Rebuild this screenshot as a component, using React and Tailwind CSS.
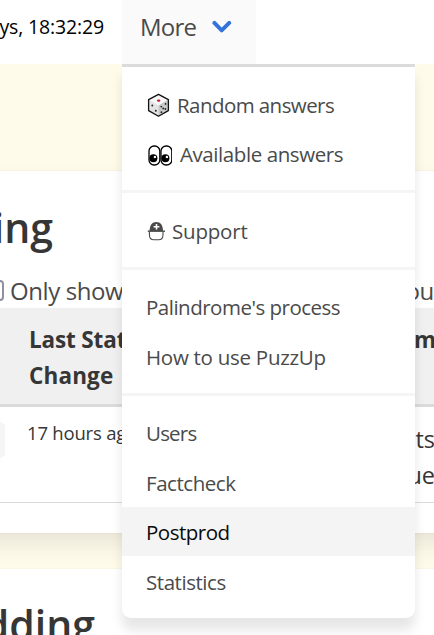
import React from "react";

function Dice() {
  return (
    <svg className="h-[24px] w-[24px] shrink-0" viewBox="0 0 24 24">
      <path d="M12.5 1.4 22.4 6.6V17.6L12.5 23.2 2.6 17.6V6.6Z" fill="#e4e4e4" />
      <path d="M12.5 1.4 22.4 6.6 12.5 12.4 2.6 6.6Z" fill="#f8f8f8" />
      <path d="M12.5 12.4 22.4 6.6V17.6L12.5 23.2Z" fill="#c9c9c9" />
      <path d="M12.5 1.4 22.4 6.6V17.6L12.5 23.2 2.6 17.6V6.6Z" fill="none" stroke="#111" strokeWidth="1.3" strokeLinejoin="round" />
      <ellipse cx="12.7" cy="7.6" rx="1.7" ry="1.2" fill="#c9152b" />
      <g fill="#222">
        <circle cx="6.3" cy="12.5" r="0.95" />
        <circle cx="9.8" cy="17.8" r="1" />
        <circle cx="19.6" cy="10.9" r="0.9" />
        <circle cx="15.3" cy="13.6" r="0.9" />
        <circle cx="17.2" cy="15.4" r="0.9" />
        <circle cx="19.4" cy="16" r="0.9" />
        <circle cx="15.4" cy="19.2" r="0.9" />
      </g>
    </svg>
  );
}

function Eyes() {
  return (
    <svg className="h-[24px] w-[26px] shrink-0" viewBox="0 0 26 24">
      <g fill="#fff" stroke="#000" strokeWidth="1.3">
        <rect x="3" y="3" width="10.8" height="19" rx="5.1" />
        <rect x="15" y="3" width="10.8" height="19" rx="5.1" />
      </g>
      <circle cx="7.4" cy="15.2" r="4" />
      <circle cx="19.4" cy="15.2" r="4" />
      <circle cx="8.9" cy="14" r="1.2" fill="#fff" />
      <circle cx="20.9" cy="14" r="1.2" fill="#fff" />
    </svg>
  );
}

function Helmet() {
  return (
    <svg className="h-[22px] w-[20px] shrink-0" viewBox="0 0 20 22">
      <path d="M3.6 11C3.6 5 6.2 1.9 10.3 1.9S17 5 17 11Z" fill="#4a4a4a" />
      <path d="M10.5 4v5.6M7.6 6.8h5.8" stroke="#fff" strokeWidth="1.6" />
      <path d="M1.8 11.2h17.2" stroke="#4a4a4a" strokeWidth="1.4" />
      <path d="M3.4 11.5v3c0 3.4 2 5.3 4.4 5.3h5c2.4 0 4.2-1.9 4.2-5.3v-3" fill="none" stroke="#4a4a4a" strokeWidth="1.1" />
    </svg>
  );
}

function Item({ icon, children, active, className = "" }) {
  return (
    <a
      className={`flex h-[49.5px] items-center pl-[24px] pt-[3px] text-[20.5px] leading-[31px] ${
        active ? "bg-[#f4f4f4] text-[#0a0a0a]" : "text-[#4a4a4a]"
      }`}
    >
      {icon}
      <span className={className}>{children}</span>
    </a>
  );
}

function Divider() {
  return <hr className="my-[12px] h-[3px] border-0 bg-[#f5f5f5]" />;
}

function Menu() {
  return (
    <div className="absolute left-[122px] top-[64px] z-10 w-[293px] rounded-b-[9px] border-t-[3px] border-[#dbdbdb] bg-white py-[12px] shadow-[0_12px_12px_rgba(10,10,10,0.1)]">
      <Item icon={<Dice />} className="ml-[7px] tracking-[-0.57px]">Random answers</Item>
      <Item icon={<Eyes />} className="ml-[8px] tracking-[-0.42px]">Available answers</Item>
      <Divider />
      <Item icon={<Helmet />} className="ml-[6px] tracking-[-0.2px]">Support</Item>
      <Divider />
      <Item className="tracking-[-0.5px]">Palindrome's process</Item>
      <Item className="tracking-[-0.27px]">How to use PuzzUp</Item>
      <Divider />
      <Item className="tracking-[-0.8px]">Users</Item>
      <Item className="tracking-[-0.45px]">Factcheck</Item>
      <Item active className="tracking-[-0.5px]">Postprod</Item>
      <Item className="tracking-[-0.45px]">Statistics</Item>
    </div>
  );
}

export default function App() {
  return (
    <div className="relative h-[635px] w-[434px] overflow-hidden whitespace-nowrap bg-[#fffbeb] font-['Open_Sans','Noto_Sans',sans-serif] text-[#4a4a4a]">
      <nav className="flex h-[64px] bg-white">
        <div className="flex w-[122px] justify-end pr-[18px] pt-[12px] text-[19.5px] leading-[30px] text-black">
          <span className="tracking-[-0.15px]">ys, 18:32:29</span>
        </div>
        <div className="flex w-[134px] bg-[#fafafa] pl-[18px] pt-[9px] text-[24px] leading-[36px]">
          <span className="w-[72px] tracking-[-0.8px]">More</span>
          <svg className="mt-[10px] h-[16px] w-[20px]" viewBox="0 0 20 16">
            <path d="M2.4 3.9 9.7 11.4 17.2 3.9" fill="none" stroke="#3273dc" strokeWidth="3.9" strokeLinecap="round" strokeLinejoin="round" />
          </svg>
        </div>
      </nav>
      <section className="-mx-[40px] mt-[107px] h-[362px] bg-white px-[40px] shadow-[0_12px_24px_-3px_rgba(10,10,10,0.1),0_0_0_1px_rgba(10,10,10,0.02)]">
        <h1 className="flex h-[102px] w-[53px] justify-end pt-[29px] text-[41px] font-[650] leading-[54px] text-[#363636]">ding</h1>
        <div className="flex h-[35px] items-center justify-between text-[24px] leading-[36px]">
          <span className="flex items-center">
            <span className="-ml-[17px] mr-[6px] h-[21px] w-[21px] rounded-[4px] border-[2.5px] border-[#8f8f9d] bg-white" />
            <span className="pt-px tracking-[-0.4px]">Only show</span>
          </span>
          <span className="pt-px tracking-[-0.3px]">ou</span>
        </div>
        <div className="-mx-[40px] flex h-[99px] justify-between border-b-[3px] border-[#dbdbdb] bg-[#f0f0f0] pl-[69px] pr-[40px] pt-[14px] text-[22.5px] font-bold leading-[36px] text-[#363636]">
          <div>
            <div className="tracking-[-0.15px]">Last Status</div>
            <div className="tracking-[0.15px]">Change</div>
          </div>
          <div className="-mr-[2px]">um</div>
        </div>
        <div className="-mx-[40px] flex h-[96px] justify-between border-b border-[#dbdbdb] px-[40px] text-[#363636]">
          <div className="flex">
            <span className="mt-[15px] h-[36px] w-[5px] rounded-r-[5px] bg-[#f5f5f5]" />
            <span className="ml-[22px] mt-[11px] text-[18.5px] leading-[30px] tracking-[-0.2px]">17 hours ago</span>
          </div>
          <div className="-mr-px pt-[14px] text-right text-[23.5px] leading-[36px]">sts<br />ue</div>
        </div>
      </section>
      <section className="-mx-[40px] mt-[36px] h-[120px] bg-white px-[40px] shadow-[0_0_0_1px_rgba(10,10,10,0.02)]">
        <h1 className="flex w-[95px] justify-end pt-[28px] text-[41px] font-[650] leading-[54px] text-[#363636]">dding</h1>
      </section>
      <Menu />
    </div>
  );
}
